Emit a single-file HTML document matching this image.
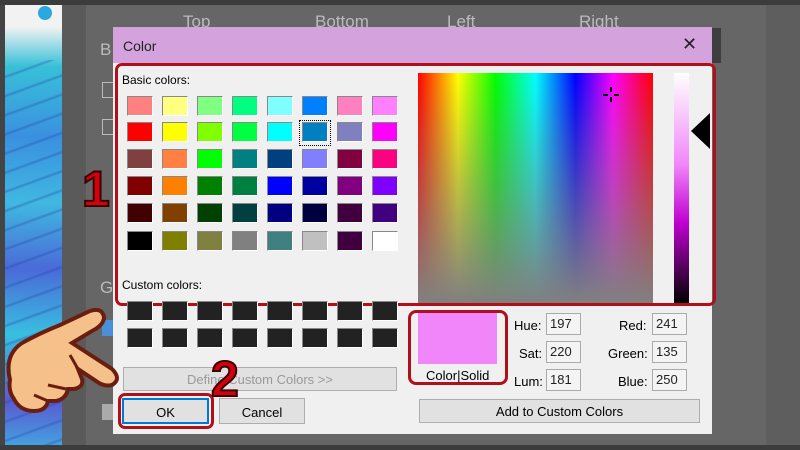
<!DOCTYPE html><html><head><style>
*{margin:0;padding:0;box-sizing:border-box}
body{width:800px;height:450px;overflow:hidden;background:#5d5d5d;font-family:"Liberation Sans",sans-serif;position:relative}
.a{position:absolute}
.sw{position:absolute;width:26px;height:20px;border:1px solid #888;border-right-color:#fff;border-bottom-color:#fff}
.lbl{position:absolute;font-size:13px;color:#000}
.in{position:absolute;width:35px;height:22px;background:#f4f4f4;border:1px solid #aaa;font-size:13px;padding:2px 0 0 3px;color:#222}
.btn{position:absolute;background:#e1e1e1;border:1px solid #adadad;font-size:13px;text-align:center;color:#000}
.big{position:absolute;font-weight:bold;font-size:50px;color:#d40010;-webkit-text-stroke:2px #3a0000;font-family:"Liberation Sans",sans-serif}
</style></head><body>
<div class="a" style="left:0;top:0;width:800px;height:5px;background:#3c3c3c"></div>
<div class="a" style="left:0;top:5px;width:5px;height:440px;background:#444"></div>
<div class="a" style="left:5px;top:5px;width:57px;height:440px;background:linear-gradient(180deg,#f2f2f2 0,#f2f2f2 5%,#38c0d8 14%,#3a90e0 30%,#40b8e0 45%,#4a6ad8 60%,#38c0e0 75%,#5a5ad0 90%,#44a0e0 100%)"></div>
<div class="a" style="left:5px;top:60px;width:57px;height:385px;background:repeating-linear-gradient(160deg,rgba(255,255,255,0) 0,rgba(255,255,255,0) 14px,rgba(30,60,160,.35) 16px,rgba(255,255,255,0) 18px)"></div>
<div class="a" style="left:38px;top:6px;width:14px;height:14px;border-radius:50%;background:#2aa8e0"></div>
<div class="a" style="left:62px;top:5px;width:24px;height:440px;background:#5a5a5a"></div>
<div class="a" style="left:86px;top:5px;width:680px;height:440px;background:#666"></div>
<div class="a" style="left:766px;top:5px;width:34px;height:440px;background:#5e5e5e"></div>
<div class="a" style="left:0;top:445px;width:800px;height:5px;background:#3c3c3c"></div>
<div class="a" style="left:183px;top:12px;color:#bbb;font-size:17px">Top</div>
<div class="a" style="left:315px;top:12px;color:#bbb;font-size:17px">Bottom</div>
<div class="a" style="left:447px;top:12px;color:#bbb;font-size:17px">Left</div>
<div class="a" style="left:579px;top:12px;color:#bbb;font-size:17px">Right</div>
<div class="a" style="left:100px;top:40px;color:#bbb;font-size:17px">B</div>
<div class="a" style="left:102px;top:82px;width:14px;height:16px;border:1px solid #bbb"></div>
<div class="a" style="left:102px;top:119px;width:14px;height:16px;border:1px solid #bbb"></div>
<div class="a" style="left:100px;top:278px;color:#bbb;font-size:17px">G</div>
<div class="a" style="left:102px;top:320px;width:12px;height:16px;background:#4a90d8"></div>
<div class="a" style="left:102px;top:404px;width:12px;height:16px;background:#aaa"></div>
<div class="a" style="left:712px;top:28px;width:9px;height:35px;background:#3e3e3e"></div>
<div class="a" style="left:113px;top:27px;width:599px;height:407px;background:#f0f0f0"></div>
<div class="a" style="left:113px;top:27px;width:599px;height:36px;background:#d4a3de"></div>
<div class="a" style="left:123px;top:38px;font-size:14px;color:#222">Color</div>
<div class="a" style="left:682px;top:34px;font-size:18px;color:#222">✕</div>
<div class="a" style="left:115px;top:63px;width:601px;height:243px;border:3px solid #b0101a;border-radius:7px"></div>
<div class="lbl" style="left:122px;top:73px;font-size:12px">Basic colors:</div>
<div class="lbl" style="left:122px;top:278px;font-size:12px">Custom colors:</div>
<div id="g"></div>
<div class="a" style="left:299px;top:120px;width:32px;height:26px;border:1px dotted #000"></div>
<div class="a" style="left:418px;top:73px;width:235px;height:230px;background:linear-gradient(180deg,rgba(128,128,128,0),rgba(128,128,128,1)),linear-gradient(90deg,#f00,#ff0 17%,#0f0 33%,#0ff 50%,#00f 67%,#f0f 83%,#f00)"></div>
<div class="a" style="left:610px;top:87px;width:2px;height:5px;background:#000"></div><div class="a" style="left:610px;top:97px;width:2px;height:5px;background:#000"></div>
<div class="a" style="left:603px;top:94px;width:5px;height:2px;background:#000"></div><div class="a" style="left:614px;top:94px;width:5px;height:2px;background:#000"></div>
<div class="a" style="left:674px;top:73px;width:15px;height:230px;background:linear-gradient(180deg,#fff,#f086fa 40%,#c000d0 65%,#000)"></div>
<div class="a" style="left:691px;top:113px;width:0;height:0;border-top:18px solid transparent;border-bottom:18px solid transparent;border-right:19px solid #000"></div>
<div class="btn" style="left:123px;top:367px;width:274px;height:24px;color:#999;padding-top:4px">Define Custom Colors &gt;&gt;</div>
<div class="a" style="left:118px;top:393px;width:96px;height:36px;border:3px solid #b0101a;border-radius:7px"></div>
<div class="btn" style="left:122px;top:398px;width:87px;height:26px;border:2px solid #0078d7;padding-top:5px">OK</div>
<div class="btn" style="left:219px;top:398px;width:86px;height:26px;padding-top:6px">Cancel</div>
<div class="a" style="left:408px;top:310px;width:100px;height:75px;border:3px solid #b0101a;border-radius:8px"></div>
<div class="a" style="left:418px;top:313px;width:79px;height:51px;background:#f086fa"></div>
<div class="lbl" style="left:426px;top:368px">Color|Solid</div>
<div class="lbl" style="left:514px;top:318px">Hue:</div><div class="in" style="left:546px;top:313px">197</div>
<div class="lbl" style="left:519px;top:346px">Sat:</div><div class="in" style="left:546px;top:341px">220</div>
<div class="lbl" style="left:514px;top:374px">Lum:</div><div class="in" style="left:546px;top:369px">181</div>
<div class="lbl" style="left:619px;top:318px">Red:</div><div class="in" style="left:652px;top:313px">241</div>
<div class="lbl" style="left:608px;top:346px">Green:</div><div class="in" style="left:652px;top:341px">135</div>
<div class="lbl" style="left:618px;top:374px">Blue:</div><div class="in" style="left:652px;top:369px">250</div>
<div class="btn" style="left:419px;top:399px;width:281px;height:24px;padding-top:4px">Add to Custom Colors</div>
<div class="big" style="left:82px;top:160px">1</div>
<div class="big" style="left:211px;top:350px">2</div>
<svg class="a" style="left:0;top:295px" width="125" height="120" viewBox="0 0 125 120">
<path d="M10 85 Q4 60 22 48 Q40 38 60 30 L90 16 Q102 12 104 22 Q104 30 92 36 L72 48 L112 74 Q122 84 112 90 Q104 92 96 86 L78 74 L82 84 Q84 92 74 94 L68 94 Q66 104 56 106 L48 106 Q46 116 34 116 Q20 116 14 104 Q8 96 10 85Z" fill="#f5c08a" stroke="#6a1e10" stroke-width="4"/>
<path d="M70 60 L78 74 M48 90 L66 94 M34 100 L48 106" stroke="#6a1e10" stroke-width="3" fill="none"/>
</svg>
<script>
var c=[["#ff8080","#ffff80","#80ff80","#00ff80","#80ffff","#0080ff","#ff80c0","#ff80ff"],["#ff0000","#ffff00","#80ff00","#00ff40","#00ffff","#0080c0","#8080c0","#ff00ff"],["#804040","#ff8040","#00ff00","#008080","#004080","#8080ff","#800040","#ff0080"],["#800000","#ff8000","#008000","#008040","#0000ff","#0000a0","#800080","#8000ff"],["#400000","#804000","#004000","#004040","#000080","#000040","#400040","#400080"],["#000000","#808000","#808040","#808080","#408080","#c0c0c0","#400040","#ffffff"]];
var ys=[96,122,149,176,203,231],h="";
for(var r=0;r<6;r++)for(var i=0;i<8;i++)h+='<div class="sw" style="left:'+(127+35*i)+'px;top:'+ys[r]+'px;background:'+c[r][i]+'"></div>';
for(var r=0;r<2;r++)for(var i=0;i<8;i++)h+='<div class="sw" style="left:'+(127+35*i)+'px;top:'+(301+27*r)+'px;background:#222"></div>';
document.getElementById('g').innerHTML=h;
</script>
</body></html>
